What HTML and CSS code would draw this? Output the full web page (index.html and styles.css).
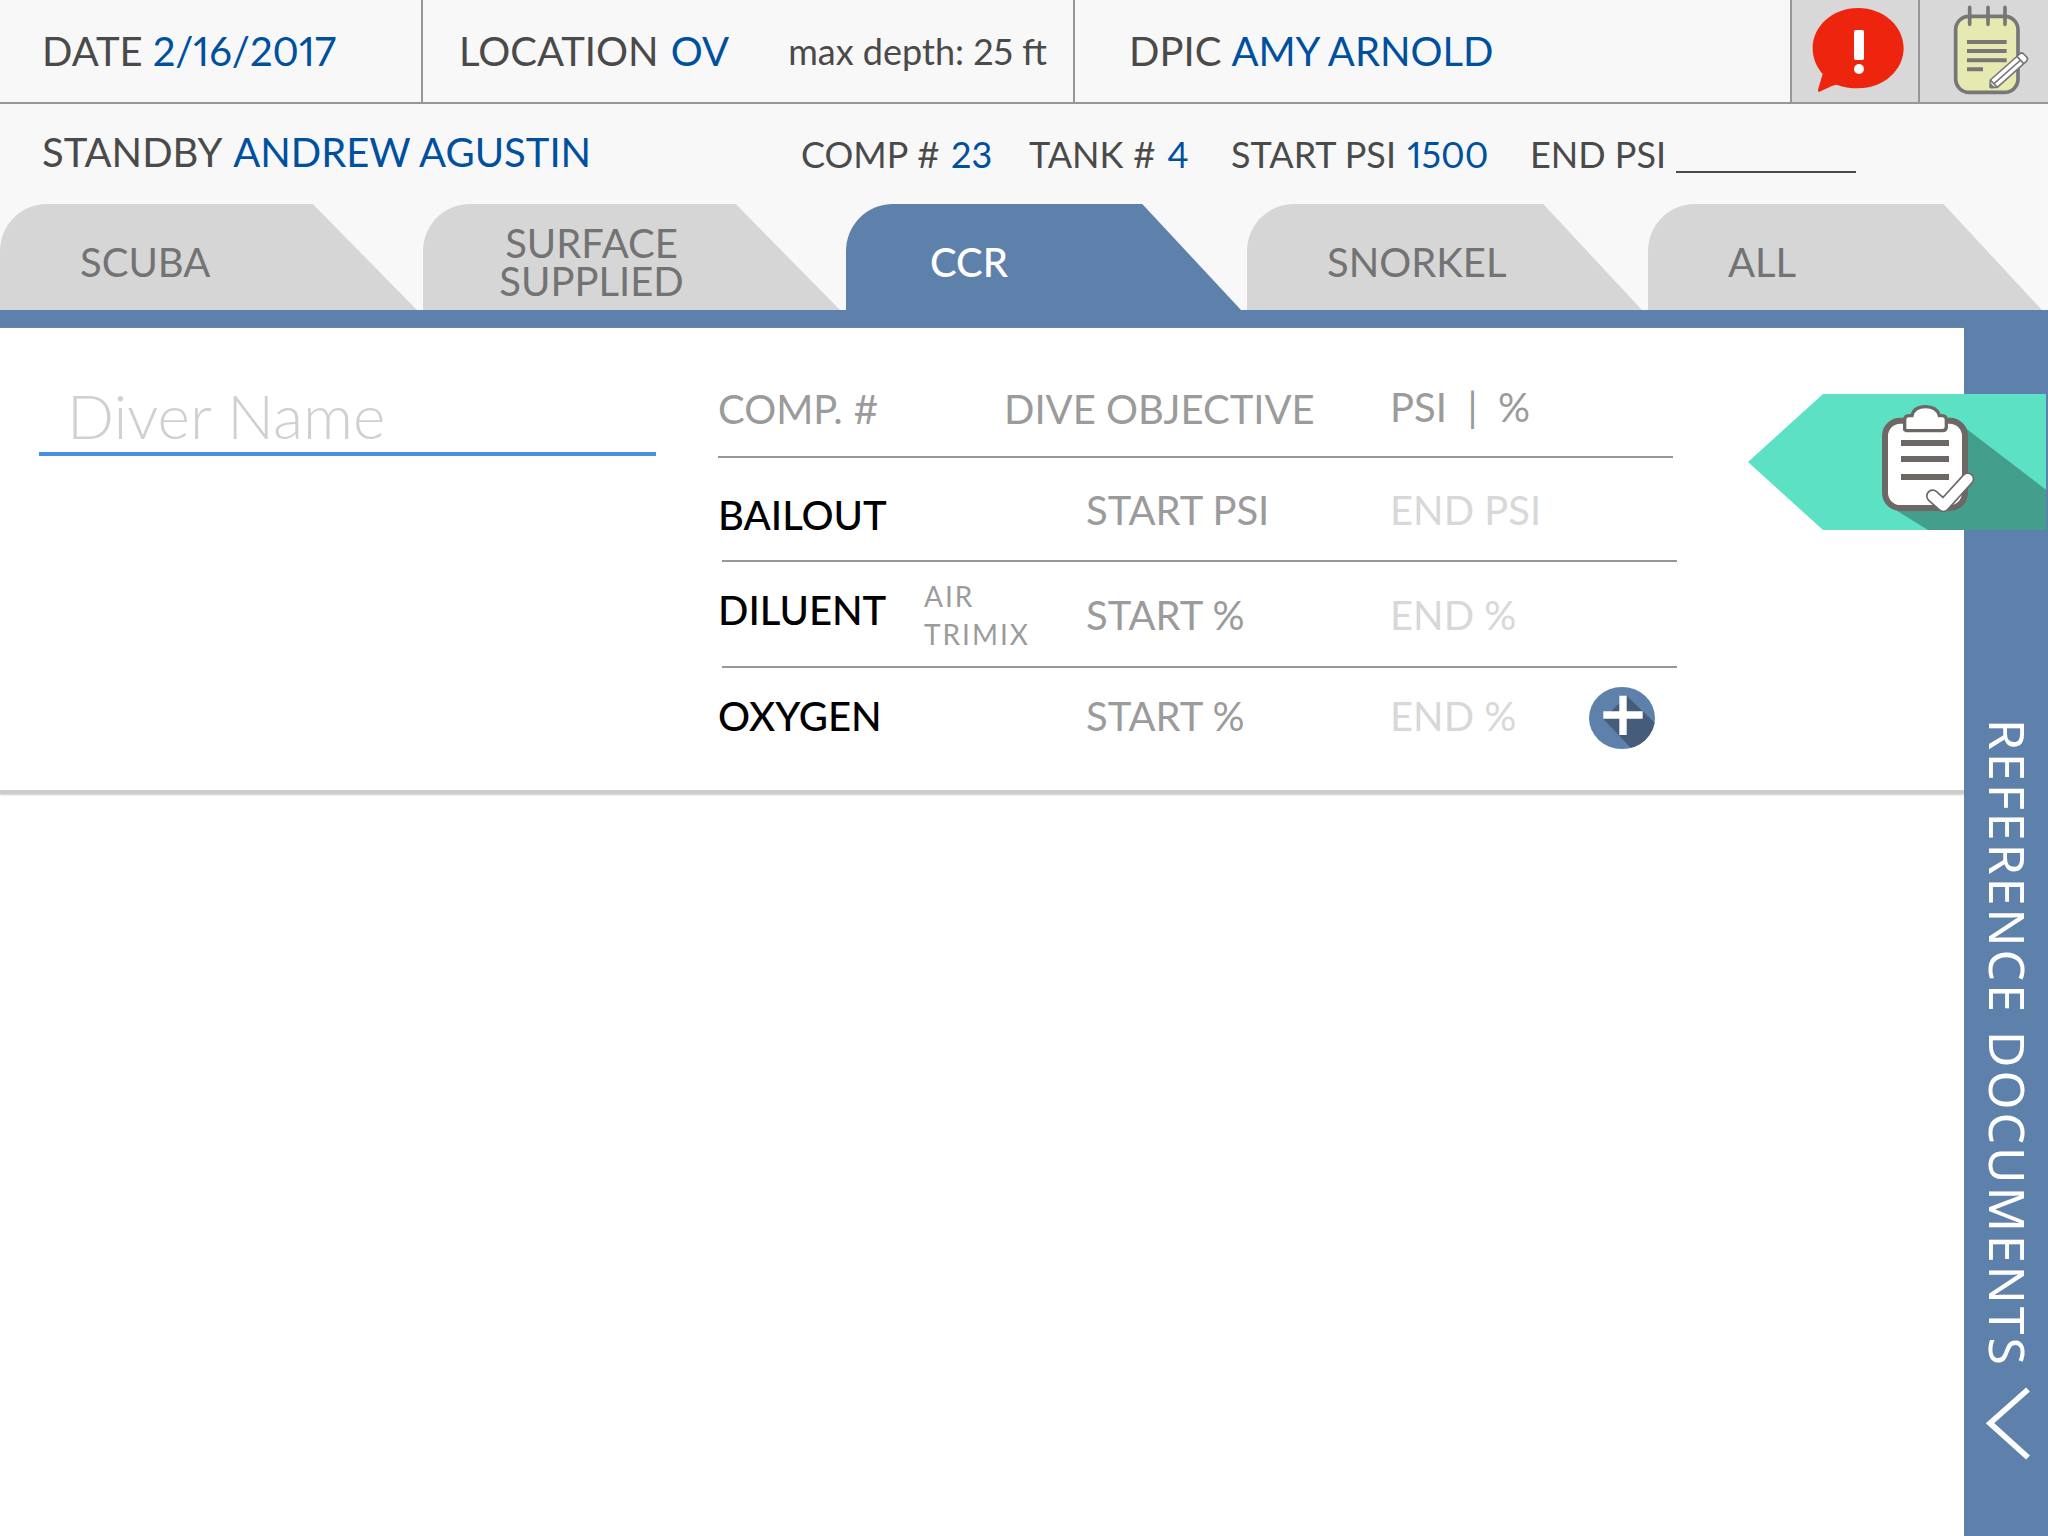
FILE: index.html
```html
<!DOCTYPE html>
<html lang="en">
<head>
<meta charset="utf-8">
<title>Dive Log</title>
<link rel="stylesheet" href="styles.css">
</head>
<body>
<header class="header">
  <div class="summary">
    <p class="summary-cell">DATE <span class="value">2/16/2017</span></p>
    <div class="summary-cell">
      <p>LOCATION <span class="value">OV</span></p>
      <p class="depth">max depth: 25 ft</p>
    </div>
    <p class="summary-cell wide">DPIC <span class="value">AMY ARNOLD</span></p>
    <button class="icon-button" type="button" aria-label="Alerts">
      <svg viewBox="156 0 378 306" width="126" height="102" aria-hidden="true">
        <path fill="#ee250e" d="M354 24C430 24 491 78 491 144C491 211 430 265 354 265C331 265 308 261 289 254C272 257 253 269 238 275Q232 276 234 269L248 222C229 200 218 174 218 144C218 78 279 24 354 24Z"/>
        <rect x="342" y="90" width="30" height="90" rx="5" fill="#fff"/>
        <circle cx="357" cy="207" r="15" fill="#fff"/>
      </svg>
    </button>
    <button class="icon-button" type="button" aria-label="Notes">
      <svg viewBox="540 0 384 306" width="128" height="102" aria-hidden="true">
        <rect x="647" y="49" width="187" height="228" rx="40" fill="#e6eab0" stroke="#777" stroke-width="11"/>
        <path d="M689 22V73M744 22V73M795 22V73" stroke="#777" stroke-width="11" stroke-linecap="round"/>
        <path d="M681 126H800M681 153H800M681 181H800M681 208H729" stroke="#777" stroke-width="12"/>
        <g fill="#fff" stroke="#777" stroke-width="5" stroke-linejoin="round">
          <path d="M751 240L839 162Q845 156 851 162L861 172Q865 178 859 184L772 262L751 262Z"/>
          <path d="M751 240L772 262M762 251L842 180M831 169L851 191" fill="none"/>
          <path d="M751 252V262H761Z" fill="#777"/>
        </g>
      </svg>
    </button>
  </div>
  <div class="standby">
    <p class="standby-name">STANDBY <span class="value">ANDREW AGUSTIN</span></p>
    <p>COMP # <span class="value">23</span></p>
    <p>TANK # <span class="value">4</span></p>
    <p>START PSI <span class="value">1500</span></p>
    <p class="end-psi"><label for="end-psi">END PSI</label><input id="end-psi" class="blank" type="text"></p>
  </div>
  <nav class="tabs">
    <a class="tab" href="#scuba"><span>SCUBA</span></a>
    <a class="tab centered" href="#surface"><span>SURFACE<br>SUPPLIED</span></a>
    <a class="tab active" href="#ccr" aria-current="page"><span>CCR</span></a>
    <a class="tab" href="#snorkel"><span>SNORKEL</span></a>
    <a class="tab" href="#all"><span>ALL</span></a>
  </nav>
</header>
<div class="body">
  <main class="content">
    <section class="entry">
      <input class="diver-name" type="text" placeholder="Diver Name" aria-label="Diver name">
      <table class="gases">
        <colgroup><col class="col-gas"><col class="col-mix"><col class="col-mix"><col class="col-start"><col></colgroup>
        <thead>
          <tr>
            <th colspan="2">COMP. #</th>
            <th colspan="2">DIVE OBJECTIVE</th>
            <th class="units">PSI&nbsp; | &nbsp;%</th>
          </tr>
        </thead>
        <tbody>
          <tr class="bailout">
            <th colspan="3" scope="row">BAILOUT</th>
            <td><input type="text" placeholder="START PSI" aria-label="Bailout start PSI"></td>
            <td><input class="end" type="text" placeholder="END PSI" aria-label="Bailout end PSI"></td>
          </tr>
          <tr class="diluent">
            <th scope="row">DILUENT</th>
            <td colspan="2"><button class="mix" type="button">AIR</button><button class="mix" type="button">TRIMIX</button></td>
            <td><input type="text" placeholder="START %" aria-label="Diluent start percent"></td>
            <td><input class="end" type="text" placeholder="END %" aria-label="Diluent end percent"></td>
          </tr>
          <tr class="oxygen">
            <th colspan="3" scope="row">OXYGEN</th>
            <td><input type="text" placeholder="START %" aria-label="Oxygen start percent"></td>
            <td>
              <div class="end-cell">
                <input class="end" type="text" placeholder="END %" aria-label="Oxygen end percent">
                <button class="add" type="button" aria-label="Add diver">
                  <svg viewBox="84 54 198 186" width="66" height="62" aria-hidden="true">
                    <clipPath id="disc"><ellipse cx="183" cy="147" rx="99" ry="93"/></clipPath>
                    <ellipse cx="183" cy="147" rx="99" ry="93" fill="#5e81ab"/>
                    <path clip-path="url(#disc)" fill="#455d7b" d="M197 80L290 170V250H222L127 150Z"/>
                    <path d="M186 80V198M127 138H245" stroke="#fff" stroke-width="22"/>
                  </svg>
                </button>
              </div>
            </td>
          </tr>
        </tbody>
      </table>
    </section>
  </main>
  <button class="reference" type="button">
    <span class="reference-label">REFERENCE DOCUMENTS</span>
    <svg viewBox="132 860 144 224" width="48" height="75" aria-hidden="true">
      <path d="M264 870L150 971L264 1074" fill="none" stroke="#fff" stroke-width="17"/>
    </svg>
  </button>
  <button class="checklist" type="button" aria-label="Checklist">
    <svg viewBox="24 42 894 408" width="298" height="136" aria-hidden="true">
      <path fill="#5ce1c4" d="M24 246L249 42H918V450H249Z"/>
      <path fill="#439f8b" d="M676 144L918 329V450H564L462 387Z"/>
      <rect x="435" y="122" width="240" height="262" rx="46" fill="#fff" stroke="#6d6866" stroke-width="18"/>
      <path d="M494 152V120Q494 107 507 107H516C520 88 535 80 557 80C579 80 593 89 598 107H606Q619 107 619 120V140Q619 152 607 152H506Q494 152 494 146Z" fill="#fff" stroke="#6d6866" stroke-width="10"/>
      <path d="M483 189H627M483 237H627M483 291H627" stroke="#6d6866" stroke-width="18"/>
      <path d="M578 348L610 377L683 297" fill="none" stroke="#6d6866" stroke-width="40" stroke-linecap="round" stroke-linejoin="round"/>
      <path d="M578 348L610 377L683 297" fill="none" stroke="#fff" stroke-width="30" stroke-linecap="round" stroke-linejoin="round"/>
      <path d="M646 371Q657 364 662 350" fill="none" stroke="#fff" stroke-width="2"/>
    </svg>
  </button>
</div>
</body>
</html>
```
FILE: styles.css
```css
* { box-sizing: border-box; }

body {
  margin: 0;
  min-height: 100vh;
  display: flex;
  flex-direction: column;
  background: #fff;
  color: #4a4a4a;
  font: 400 40px/48px Lato, "Open Sans", sans-serif;
  font-variant-numeric: proportional-nums;
}

p { margin: 0; white-space: nowrap; }

button, input {
  margin: 0;
  padding: 0;
  border: 0;
  background: none;
  color: inherit;
  font: inherit;
}

button { cursor: pointer; }
svg { display: block; }

.value {
  margin-left: 2px;
  color: #0050a0;
}

/* Header */
.header { background: #f8f8f8; }

.summary {
  display: grid;
  grid-template-columns: 421fr 652fr 717fr 128fr 130fr;
  height: 104px;
  border-bottom: 2px solid #979797;
}

.summary-cell {
  display: flex;
  align-items: center;
  justify-content: space-between;
  padding: 0 26px 0 36px;
  border-left: 2px solid #979797;
}

p.summary-cell {
  justify-content: flex-start;
  gap: 8px;
}

.summary-cell:first-child {
  border-left: 0;
  padding-left: 42px;
}

.summary-cell.wide { padding-left: 54px; }
.depth { font-size: 36px; }

.icon-button {
  background: #d8d8d8;
  border-left: 2px solid #979797;
}

.standby {
  display: grid;
  grid-template-columns: 801fr 228fr 202fr 299fr 518fr;
  align-items: center;
  height: 100px;
  font-size: 36px;
}

.standby-name {
  padding: 0 0 4px 42px;
  font-size: 40px;
}

.end-psi {
  display: flex;
  gap: 10px;
}

.blank {
  width: 180px;
  height: 43px;
  border-bottom: 2px solid #4a4a4a;
}

/* Tabs */
.tabs {
  display: grid;
  grid-template-columns: 423fr 423fr 401fr 401fr 400fr;
  border-bottom: 18px solid #5e81ab;
}

.tab {
  display: flex;
  align-items: center;
  height: 106px;
  margin-right: 6px;
  padding: 10px 80px 0;
  border-top-left-radius: 47px;
  background: #d6d6d6;
  clip-path: polygon(0 0, 75% 0, 100% 100%, 0 100%);
  color: #737373;
  line-height: 38px;
  text-decoration: none;
}

.tab.centered {
  justify-content: center;
  padding-left: 0;
  text-align: center;
}

.tab.active {
  padding-left: 84px;
  background: #5e81ab;
  color: #fff;
  font-weight: 500;
}

/* Body */
.body {
  position: relative;
  flex: 1;
  display: flex;
}

.content { flex: 1; min-width: 0; }

.entry {
  display: grid;
  grid-template-columns: 617fr 959fr;
  column-gap: 62px;
  align-items: start;
  padding: 0 287px 26px 39px;
  border-bottom: 4px solid #ccc;
  box-shadow: 0 1px 2px #ccc;
}

.diver-name {
  width: 100%;
  height: 84px;
  margin-top: 44px;
  padding: 6px 28px 0;
  border-bottom: 4px solid #4a90e2;
  font-size: 62px;
  font-weight: 300;
}

.diver-name::placeholder { color: #d0d0d0; opacity: 1; }

/* Gas table */
.gases {
  width: 100%;
  table-layout: fixed;
  border-collapse: collapse;
  color: #9b9b9b;
}

.col-gas { width: 204px; }
.col-mix { width: 82px; }
.col-start { width: 304px; }

.gases th, .gases td {
  padding: 0;
  font-weight: 400;
  text-align: left;
  vertical-align: middle;
}

.gases tr {
  background: linear-gradient(#979797, #979797) 100% 100% / calc(100% - 4px) 2px no-repeat;
}

.gases thead tr {
  height: 130px;
  background-position: 0 100%;
}

.gases thead th { padding-top: 32px; }
.gases thead .units { padding-top: 28px; }
.gases tbody th { color: #000; font-weight: 500; }
.bailout { height: 104px; }
.bailout th { padding-top: 10px; }
.diluent { height: 106px; }
.diluent th { padding-bottom: 10px; }
.gases .oxygen { height: 96px; background: none; }

.gases input {
  display: block;
  width: 100%;
  height: 48px;
}

.gases input::placeholder { color: #9b9b9b; opacity: 1; }
.gases input.end::placeholder { color: #d8d8d8; }

.mix {
  display: block;
  padding-left: 2px;
  font-size: 28px;
  line-height: 38px;
  letter-spacing: 2px;
}

.end-cell {
  display: grid;
  grid-template-columns: 199px 66px;
  align-items: center;
}

.add { padding-top: 4px; }

/* Reference drawer */
.reference {
  width: 84px;
  display: flex;
  flex-direction: column;
  align-items: center;
  justify-content: flex-end;
  gap: 18px;
  padding: 0 0 75px 4px;
  background: #5e81ab;
  color: #fff;
}

.reference-label {
  writing-mode: vertical-rl;
  font: 400 50px/60px "Noto Sans", sans-serif;
  letter-spacing: 3px;
  white-space: nowrap;
}

.checklist {
  position: absolute;
  top: 66px;
  right: 2px;
}
```
